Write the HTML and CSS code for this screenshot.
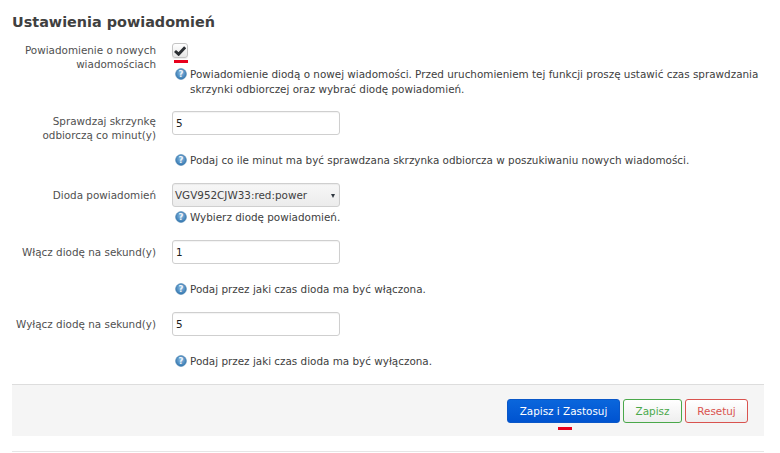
FILE: index.html
```html
<!DOCTYPE html>
<html lang="pl">
<head>
<meta charset="utf-8">
<title>Ustawienia powiadomień</title>
<link rel="stylesheet" href="styles.css">
</head>
<body>
<svg class="defs" width="0" height="0" aria-hidden="true">
  <defs>
    <radialGradient id="ball" cx="50%" cy="40%" r="60%">
      <stop offset="0" stop-color="#8fbde3"/>
      <stop offset="1" stop-color="#2f74ad"/>
    </radialGradient>
    <symbol id="help" viewBox="0 0 12 12">
      <circle cx="6" cy="6" r="5.4" fill="url(#ball)" stroke="#4a82b0" stroke-width=".6"/>
      <text x="6" y="9.2" text-anchor="middle" font-family="DejaVu Sans" font-weight="700" font-size="8.5" fill="#eef5fb">?</text>
    </symbol>
  </defs>
</svg>
<div class="page">
  <h2 class="title">Ustawienia powiadomień</h2>

  <div class="row row-check">
    <label class="label">Powiadomienie o nowych wiadomościach</label>
    <div class="field">
      <span class="checkbox">
        <svg class="tick" viewBox="0 0 12 10" width="12" height="10"><path d="M1 5 L4.6 8.2 L11.2 1.2" fill="none" stroke="#2b2f33" stroke-width="3"/></svg>
      </span>
      <span class="accent accent-check"></span>
      <div class="hint hint-check"><svg class="help"><use href="#help"/></svg><span>Powiadomienie diodą o nowej wiadomości. Przed uruchomieniem tej funkcji proszę ustawić czas sprawdzania skrzynki odbiorczej oraz wybrać diodę powiadomień.</span></div>
    </div>
  </div>

  <div class="row row-interval">
    <label class="label">Sprawdzaj skrzynkę odbiorczą co minut(y)</label>
    <div class="field">
      <div class="input">5</div>
      <div class="hint hint-far"><svg class="help"><use href="#help"/></svg><span>Podaj co ile minut ma być sprawdzana skrzynka odbiorcza w poszukiwaniu nowych wiadomości.</span></div>
    </div>
  </div>

  <div class="row row-led">
    <label class="label label-mid">Dioda powiadomień</label>
    <div class="field">
      <div class="select">VGV952CJW33:red:power<span class="arrow"></span></div>
      <div class="hint hint-near"><svg class="help"><use href="#help"/></svg><span>Wybierz diodę powiadomień.</span></div>
    </div>
  </div>

  <div class="row row-on">
    <label class="label label-mid">Włącz diodę na sekund(y)</label>
    <div class="field">
      <div class="input">1</div>
      <div class="hint hint-far"><svg class="help"><use href="#help"/></svg><span>Podaj przez jaki czas dioda ma być włączona.</span></div>
    </div>
  </div>

  <div class="row row-off">
    <label class="label label-mid">Wyłącz diodę na sekund(y)</label>
    <div class="field">
      <div class="input">5</div>
      <div class="hint hint-far"><svg class="help"><use href="#help"/></svg><span>Podaj przez jaki czas dioda ma być wyłączona.</span></div>
    </div>
  </div>

  <div class="actions">
    <button class="btn btn-apply">Zapisz i Zastosuj<span class="accent accent-btn"></span></button>
    <button class="btn btn-save">Zapisz</button>
    <button class="btn btn-reset">Resetuj</button>
  </div>
  <div class="endline"></div>
</div>
</body>
</html>
```

FILE: styles.css
```css
html, body {
    margin: 0;
    padding: 0;
    background: #fff;
}
body {
    width: 780px;
    height: 453px;
    overflow: hidden;
    font-family: "DejaVu Sans", sans-serif;
    font-size: 10.4px;
    line-height: 14px;
    color: #404040;
}
.defs {
    position: absolute;
}
.page {
    padding: 0 16px 0 12px;
}
.title {
    margin: 0;
    padding-top: 13px;
    height: 42px;
    box-sizing: border-box;
    font-size: 14.4px;
    line-height: 18px;
    font-weight: bold;
    color: #404040;
}
.row {
    display: flex;
}
.row-check { height: 69px; }
.row-interval { height: 72px; }
.row-led { height: 57px; }
.row-on { height: 72px; }
.row-off { height: 72px; }
.label {
    width: 144px;
    flex: none;
    text-align: right;
    margin-right: 16px;
    padding-top: 1px;
    line-height: 14px;
    color: #505050;
}
.label-mid {
    padding-top: 5px;
}
.row-interval .label {
    padding-top: 3px;
}
.field {
    flex: 1;
    min-width: 0;
}
.checkbox {
    display: flex;
    align-items: center;
    justify-content: center;
    box-sizing: border-box;
    width: 16px;
    height: 15px;
    margin-top: 1px;
    border: 1px solid #c4c4c4;
    border-radius: 3px;
    background: linear-gradient(#fff, #e6e6e6);
    box-shadow: 0 1px 1px rgba(0,0,0,.08);
}
.tick {
    flex: none;
}
.accent {
    display: block;
    width: 14px;
    height: 3px;
    background: #e8001c;
}
.accent-check {
    margin: 2px 0 0 2px;
}
.accent-btn {
    position: absolute;
    left: 50px;
    bottom: -8px;
}
.help {
    width: 12px;
    height: 12px;
    flex: none;
    margin: 1px 3px 0 3px;
}
.hint {
    display: flex;
    line-height: 15px;
    color: #404040;
}
.hint-check { margin-top: 4px; }
.hint-far { margin-top: 18px; }
.hint-near { margin-top: 3px; }
.input, .select {
    box-sizing: border-box;
    width: 168px;
    height: 24px;
    line-height: 22px;
    padding: 0 3px;
    border: 1px solid #cfcfcf;
    border-radius: 3px;
    font-size: 10.4px;
    color: #202020;
    background: #fff;
    box-shadow: inset 0 1px 1px rgba(0,0,0,.05);
}
.select {
    position: relative;
    padding: 0 2px;
    color: #404040;
    background: linear-gradient(#f7f7f7, #ececec);
}
.arrow {
    position: absolute;
    right: 4px;
    top: 10px;
    border-left: 2.5px solid transparent;
    border-right: 2.5px solid transparent;
    border-top: 4px solid #303840;
}
.actions {
    display: flex;
    justify-content: flex-end;
    gap: 3px;
    height: 52px;
    box-sizing: border-box;
    width: 752px;
    padding: 14px 16px 0 0;
    background: #f5f5f5;
    border-top: 1px solid #ddd;
}
.btn {
    position: relative;
    box-sizing: border-box;
    height: 24px;
    padding: 0;
    font: 10.4px "DejaVu Sans", sans-serif;
    border-radius: 3px;
    background: linear-gradient(#fff, #eee);
}
.btn-apply {
    width: 113px;
    color: #fff;
    border: 1px solid #0a57c8;
    background: linear-gradient(#0a66dc, #0053d0);
}
.btn-save {
    width: 59px;
    color: #4aa84a;
    border: 1px solid #4aa84a;
}
.btn-reset {
    width: 63px;
    color: #d9534f;
    border: 1px solid #d9534f;
}
.endline {
    width: 752px;
    height: 1px;
    margin-top: 15px;
    background: #e6e6e6;
}
```
